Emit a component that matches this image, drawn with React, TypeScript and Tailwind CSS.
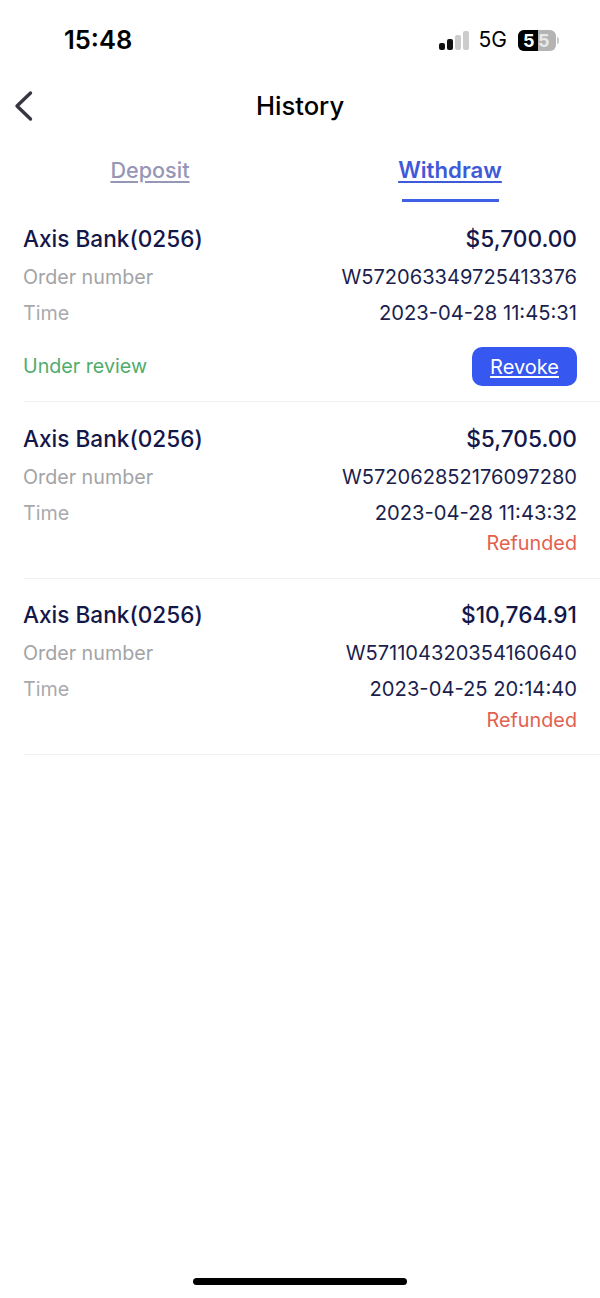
import React from "react";

type Item = { amount: string; order: string; time: string; status: "review" | "refunded"; pad: string; gap: string };

const items: Item[] = [
  { amount: "$5,700.00", order: "W572063349725413376", time: "2023-04-28 11:45:31", status: "review", pad: "pt-[22px] pb-[22px]", gap: "mt-[2px]" },
  { amount: "$5,705.00", order: "W572062852176097280", time: "2023-04-28 11:43:32", status: "refunded", pad: "pt-[21px] pb-[23px]", gap: "mt-[2px]" },
  { amount: "$10,764.91", order: "W571104320354160640", time: "2023-04-25 20:14:40", status: "refunded", pad: "pt-[20px] pb-[22px]", gap: "mt-[3px]" },
];

function Card({ item }: { item: Item }) {
  return (
    <div className={`ml-6 border-b border-[#f1f1f3] pr-[23px] ${item.pad}`}>
      <div className="flex h-8 items-center justify-between text-[22.7px] font-medium text-[#14174a]">
        <span className="-ml-px text-[22.6px]">Axis Bank(0256)</span>
        <span>{item.amount}</span>
      </div>
      <div className="mt-[6px] flex h-8 items-center justify-between text-[20px]">
        <span className="mt-[2px] -ml-px text-[19.7px] text-[#a3a3a6]">Order number</span>
        <span className="text-[20.1px] text-[#1c1f4e]">{item.order}</span>
      </div>
      <div className="mt-1 flex h-8 items-center justify-between text-[20px]">
        <span className="mt-[2px] -ml-px text-[19.7px] text-[#a9a9ac]">Time</span>
        <span className="text-[20.2px] text-[#1c1f4e]">{item.time}</span>
      </div>
      {item.status === "review" ? (
        <div className="mt-[18px] -mb-[7px] flex items-center justify-between text-[20px]">
          <span className="-ml-px text-[19.7px] text-[#50ac6c]">Under review</span>
          <span className="flex h-[39px] w-[105px] items-center justify-center rounded-[10px] bg-[#3657f0] text-white underline underline-offset-2">
            Revoke
          </span>
        </div>
      ) : (
        <div className={`${item.gap} h-6 text-right text-[19.8px] leading-6 text-[#e2604f]`}>Refunded</div>
      )}
    </div>
  );
}

export default function App() {
  return (
    <div
      className="flex h-[1298px] w-[600px] flex-col overflow-hidden bg-white"
      style={{ fontFamily: "Inter, 'Noto Sans', sans-serif" }}
    >
      <div className="flex h-[80px] items-start justify-between pt-[24px] pr-[41px] pl-[64px]">
        <span className="text-[25.5px] leading-[32px] font-semibold text-black">15:48</span>
        <div className="flex h-[32px] items-center">
          <svg width="30" height="20" viewBox="0 0 30 20" className="mr-[10px]">
            <rect x="0" y="13" width="6" height="7" rx="2" fill="#111" />
            <rect x="8" y="9" width="6" height="11" rx="2" fill="#111" />
            <rect x="16" y="5" width="6" height="15" rx="2" fill="#ccc" />
            <rect x="24" y="1" width="6" height="19" rx="2" fill="#ccc" />
          </svg>
          <span className="mr-[11px] text-[21px] font-normal text-black">5G</span>
          <div className="flex h-[21px] w-[38px] overflow-hidden rounded-[6px] bg-[#b4b4b4] text-[18px] leading-[21px] font-bold">
            <div className="w-[20px] bg-black pl-[5px] text-white">5</div>
            <div className="text-[#e8e8e8]">5</div>
          </div>
          <div className="ml-[1px] h-[7px] w-[2px] rounded-r-full bg-[#c9c9c9]" />
        </div>
      </div>

      <div className="relative flex h-[52px] items-center justify-center">
        <svg width="20" height="32" viewBox="0 0 20 32" className="absolute top-[10px] left-[13px]">
          <path d="M17.5 3 L4 16 L17.5 29" fill="none" stroke="#35363f" strokeWidth="3.4" strokeLinecap="round" strokeLinejoin="round" />
        </svg>
        <span className="text-[25.6px] font-medium text-black">History</span>
      </div>

      <div className="grid h-[69px] grid-cols-2">
        <div className="flex justify-center pt-[23px]">
          <span className="text-[21.6px] leading-[30px] font-medium text-[#9696b6] underline underline-offset-3">Deposit</span>
        </div>
        <div className="flex flex-col items-center pt-[23px]">
          <span className="text-[22.2px] leading-[30px] font-semibold text-[#3f5ad8] underline underline-offset-3">Withdraw</span>
          <div className="mt-[14px] h-[3px] w-[97px] bg-[#3f5fe6]" />
        </div>
      </div>

      <div className="flex flex-col">
        {items.map((item) => (
          <Card key={item.order} item={item} />
        ))}
      </div>

      <div className="mt-auto mb-[13px] h-[7px] w-[214px] self-center rounded-full bg-black" />
    </div>
  );
}
